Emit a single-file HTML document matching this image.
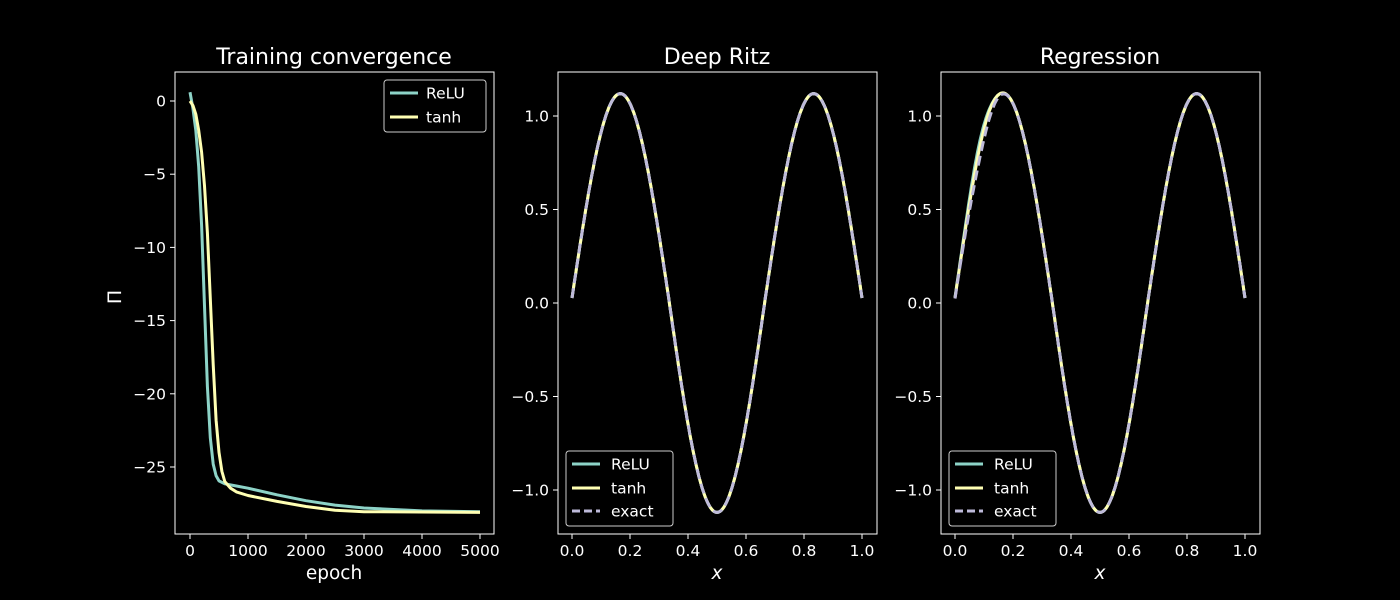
<!DOCTYPE html>
<html><head><meta charset="utf-8"><style>
html,body{margin:0;padding:0;background:#000;}
svg{display:block;font-family:"DejaVu Sans","Liberation Sans",sans-serif;}
</style></head><body>
<svg id="s" width="1400" height="600" viewBox="0 0 1400 600" xmlns="http://www.w3.org/2000/svg">
<rect width="1400" height="600" fill="#000"/>
<g id="g"></g>
</svg>
<script>
const NS="http://www.w3.org/2000/svg";
const g=document.getElementById('g');
function el(t,a,txt){const e=document.createElementNS(NS,t);for(const k in a)e.setAttribute(k,a[k]);if(txt!==undefined)e.textContent=txt;g.appendChild(e);return e;}
const C1="#8dd3c7",C2="#ffffb3",C3="#bebada";
const TF=15.5;
(function(){
 const X=e=>190+e*290/5000, Y=v=>101-v*14.64;
 const relu=[[0,0.6],[50,-0.5],[100,-2],[150,-4.5],[200,-8.5],[250,-14],[300,-19.5],[350,-23],[400,-24.8],[450,-25.6],[500,-25.95],[600,-26.15],[800,-26.3],[1000,-26.45],[1500,-26.9],[2000,-27.3],[2500,-27.6],[3000,-27.8],[4000,-28],[5000,-28.05]];
 const tanh=[[0,0],[50,-0.3],[100,-0.9],[150,-2],[200,-3.5],[250,-5.8],[300,-9],[350,-13.5],[400,-18],[450,-21.8],[500,-24],[550,-25.3],[600,-26],[700,-26.45],[800,-26.7],[1000,-26.95],[1500,-27.35],[2000,-27.7],[2500,-27.95],[3000,-28.05],[5000,-28.1]];
 const pts=a=>a.map(p=>X(p[0]).toFixed(1)+','+Y(p[1]).toFixed(1)).join(' ');
 el('polyline',{points:pts(relu),fill:'none',stroke:C1,'stroke-width':3,'stroke-linejoin':'round'});
 el('polyline',{points:pts(tanh),fill:'none',stroke:C2,'stroke-width':3,'stroke-linejoin':'round'});
 el('rect',{x:175,y:72,width:319,height:462,fill:'none',stroke:'#fff','stroke-width':1});
 [0,-5,-10,-15,-20,-25].forEach(v=>{const y=Y(v);el('line',{x1:170,x2:175,y1:y,y2:y,stroke:'#fff'});el('text',{x:166,y:y+5.5,fill:'#fff','font-size':TF,'text-anchor':'end'},v===0?'0':'\u2212'+(-v));});
 [0,1000,2000,3000,4000,5000].forEach(v=>{const x=X(v);el('line',{x1:x,x2:x,y1:534,y2:539,stroke:'#fff'});el('text',{x:x,y:556,fill:'#fff','font-size':TF,'text-anchor':'middle'},v);});
 el('text',{x:334,y:64,fill:'#fff','font-size':22,'text-anchor':'middle'},'Training convergence');
 el('text',{x:334,y:579,fill:'#fff','font-size':18.5,'text-anchor':'middle'},'epoch');
 el('text',{x:0,y:0,fill:'#fff','font-size':19,'text-anchor':'middle',transform:'translate(121,297) rotate(-90)'},'\u03a0');
 el('rect',{x:384,y:80,width:102,height:52,rx:3,fill:'#000',stroke:'#ccc','stroke-width':1});
 el('line',{x1:390,x2:418,y1:93,y2:93,stroke:C1,'stroke-width':3});el('text',{x:426,y:98.5,fill:'#fff','font-size':TF},'ReLU');
 el('line',{x1:390,x2:418,y1:117,y2:117,stroke:C2,'stroke-width':3});el('text',{x:426,y:122.5,fill:'#fff','font-size':TF},'tanh');
})();
function panel(x0,title,perturb){
 const X=v=>x0+14+v*290, Y=v=>303-v*187;
 const f=x=>{const s=Math.sin(3*Math.PI*x);return 1.12*s+0.027*(1-Math.abs(s));};
 function path(fn){let s='';for(let i=0;i<=300;i++){const x=i/300;s+=(i?'L':'M')+X(x).toFixed(1)+','+Y(fn(x)).toFixed(1);}return s;}
 el('path',{d:path(x=>f(x)+(perturb?0.05*Math.exp(-Math.pow((x-0.08)/0.05,2)):0)),fill:'none',stroke:C1,'stroke-width':3});
 el('path',{d:path(x=>f(x)+(perturb?0.02*Math.exp(-Math.pow((x-0.1)/0.05,2)):0)),fill:'none',stroke:C2,'stroke-width':3});
 el('path',{d:path(x=>f(x)-(perturb?0.04*Math.exp(-Math.pow((x-0.08)/0.05,2)):0)),fill:'none',stroke:C3,'stroke-width':3,'stroke-dasharray':'10,5'});
 el('rect',{x:x0,y:72,width:319,height:462,fill:'none',stroke:'#fff','stroke-width':1});
 [[1,'1.0'],[0.5,'0.5'],[0,'0.0'],[-0.5,'\u22120.5'],[-1,'\u22121.0']].forEach(([v,t])=>{const y=Y(v);el('line',{x1:x0-5,x2:x0,y1:y,y2:y,stroke:'#fff'});el('text',{x:x0-9,y:y+5.5,fill:'#fff','font-size':TF,'text-anchor':'end'},t);});
 [0,0.2,0.4,0.6,0.8,1].forEach(v=>{const x=X(v);el('line',{x1:x,x2:x,y1:534,y2:539,stroke:'#fff'});el('text',{x:x,y:556,fill:'#fff','font-size':TF,'text-anchor':'middle'},v.toFixed(1));});
 el('text',{x:x0+159,y:64,fill:'#fff','font-size':22,'text-anchor':'middle'},title);
 el('text',{x:x0+159,y:579,fill:'#fff','font-size':18.5,'text-anchor':'middle','font-style':'italic'},'x');
 const lx=x0+8;
 el('rect',{x:lx,y:451,width:107,height:75,rx:3,fill:'#000',stroke:'#ccc','stroke-width':1});
 el('line',{x1:lx+6,x2:lx+34,y1:464,y2:464,stroke:C1,'stroke-width':3});el('text',{x:lx+45,y:469.5,fill:'#fff','font-size':TF},'ReLU');
 el('line',{x1:lx+6,x2:lx+34,y1:488,y2:488,stroke:C2,'stroke-width':3});el('text',{x:lx+45,y:493.5,fill:'#fff','font-size':TF},'tanh');
 el('line',{x1:lx+6,x2:lx+34,y1:511,y2:511,stroke:C3,'stroke-width':3,'stroke-dasharray':'8,4'});el('text',{x:lx+45,y:516.5,fill:'#fff','font-size':TF},'exact');
}
panel(558,'Deep Ritz',false);
panel(941,'Regression',true);
</script>
</body></html>
